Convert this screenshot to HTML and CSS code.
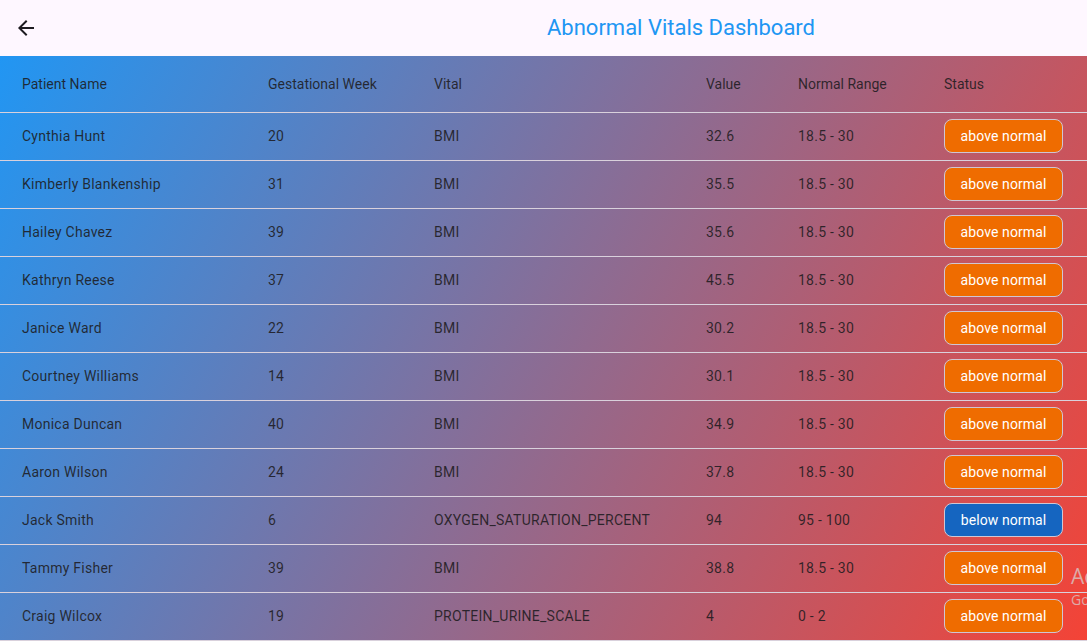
FILE: index.html
```html
<!DOCTYPE html>
<html>
<head>
<meta charset="utf-8">
<title>Abnormal Vitals Dashboard</title>
<link rel="stylesheet" href="styles.css">
</head>
<body>
<div class="app">
  <header class="appbar">
    <button class="back" aria-label="Back">
      <svg viewBox="0 0 24 24" width="24" height="24"><path d="M20 11H7.83l5.59-5.59L12 4l-8 8 8 8 1.41-1.41L7.83 13H20v-2z" fill="#1d1b20"/></svg>
    </button>
    <h1 class="title">Abnormal Vitals Dashboard</h1>
  </header>
  <main class="content">
    <div class="table">
      <div class="row head">
        <div>Patient Name</div><div>Gestational Week</div><div>Vital</div><div>Value</div><div>Normal Range</div><div>Status</div>
      </div>
      <div class="row"><div>Cynthia Hunt</div><div>20</div><div>BMI</div><div>32.6</div><div>18.5 - 30</div><div><span class="badge above">above normal</span></div></div>
      <div class="row"><div>Kimberly Blankenship</div><div>31</div><div>BMI</div><div>35.5</div><div>18.5 - 30</div><div><span class="badge above">above normal</span></div></div>
      <div class="row"><div>Hailey Chavez</div><div>39</div><div>BMI</div><div>35.6</div><div>18.5 - 30</div><div><span class="badge above">above normal</span></div></div>
      <div class="row"><div>Kathryn Reese</div><div>37</div><div>BMI</div><div>45.5</div><div>18.5 - 30</div><div><span class="badge above">above normal</span></div></div>
      <div class="row"><div>Janice Ward</div><div>22</div><div>BMI</div><div>30.2</div><div>18.5 - 30</div><div><span class="badge above">above normal</span></div></div>
      <div class="row"><div>Courtney Williams</div><div>14</div><div>BMI</div><div>30.1</div><div>18.5 - 30</div><div><span class="badge above">above normal</span></div></div>
      <div class="row"><div>Monica Duncan</div><div>40</div><div>BMI</div><div>34.9</div><div>18.5 - 30</div><div><span class="badge above">above normal</span></div></div>
      <div class="row"><div>Aaron Wilson</div><div>24</div><div>BMI</div><div>37.8</div><div>18.5 - 30</div><div><span class="badge above">above normal</span></div></div>
      <div class="row"><div>Jack Smith</div><div>6</div><div>OXYGEN_SATURATION_PERCENT</div><div>94</div><div>95 - 100</div><div><span class="badge below">below normal</span></div></div>
      <div class="row"><div>Tammy Fisher</div><div>39</div><div>BMI</div><div>38.8</div><div>18.5 - 30</div><div><span class="badge above">above normal</span></div></div>
      <div class="row"><div>Craig Wilcox</div><div>19</div><div>PROTEIN_URINE_SCALE</div><div>4</div><div>0 - 2</div><div><span class="badge above">above normal</span></div></div>
    </div>
  </main>
  <div class="watermark">
    <div class="wm1">Activate Windows</div>
    <div class="wm2">Go to Settings to activate Windows.</div>
  </div>
</div>
</body>
</html>
```
FILE: styles.css
```css
* { box-sizing: border-box; }
html, body { margin: 0; padding: 0; }
body {
  font-family: Roboto, "Liberation Sans", sans-serif;
  width: 1087px;
  height: 641px;
  overflow: hidden;
}
.app {
  position: relative;
  width: 1087px;
  height: 641px;
  overflow: hidden;
  display: flex;
  flex-direction: column;
}
.appbar {
  height: 56px;
  flex: 0 0 56px;
  background: #fef7ff;
  display: flex;
  align-items: center;
}
.back {
  width: 24px;
  height: 24px;
  margin-left: 14px;
  padding: 0;
  border: 0;
  background: transparent;
  display: flex;
  align-items: center;
  justify-content: center;
}
.back svg { display: block; }
.title {
  margin: 0 0 0 509px;
  font-size: 22px;
  font-weight: 400;
  color: #2196f3;
  line-height: 28px;
  letter-spacing: 0;
}
.content {
  flex: 1;
  background: linear-gradient(118.3deg, #2196f3 0%, #f44336 100%);
}
.table {
  display: flex;
  flex-direction: column;
}
.row {
  display: grid;
  grid-template-columns: 246px 166px 272px 92px 146px 119px;
  padding-left: 22px;
  padding-bottom: 1px;
  height: 48px;
  align-items: center;
  border-bottom: 1px solid #d9d1dc;
  font-size: 14px;
  color: rgba(29, 27, 32, 0.88);
  letter-spacing: 0.25px;
}
.row.head {
  height: 57px;
  padding-bottom: 0;
  letter-spacing: 0;
}
.badge {
  display: flex;
  align-items: center;
  justify-content: center;
  width: 119px;
  height: 34px;
  border: 1.5px solid #cfc6d3;
  border-radius: 8px;
  color: #ffffff;
  font-weight: 400;
  font-size: 14px;
  letter-spacing: 0.1px;
}
.badge.above { background: #ef6c00; }
.badge.below { background: #1565c0; }
.watermark {
  position: absolute;
  left: 1071px;
  top: 562px;
  white-space: nowrap;
  font-family: "Open Sans", "Noto Sans", sans-serif;
  color: rgba(215, 205, 205, 0.75);
}
.wm1 { font-size: 21px; line-height: 28px; }
.wm2 { font-size: 14px; line-height: 20px; }
```
